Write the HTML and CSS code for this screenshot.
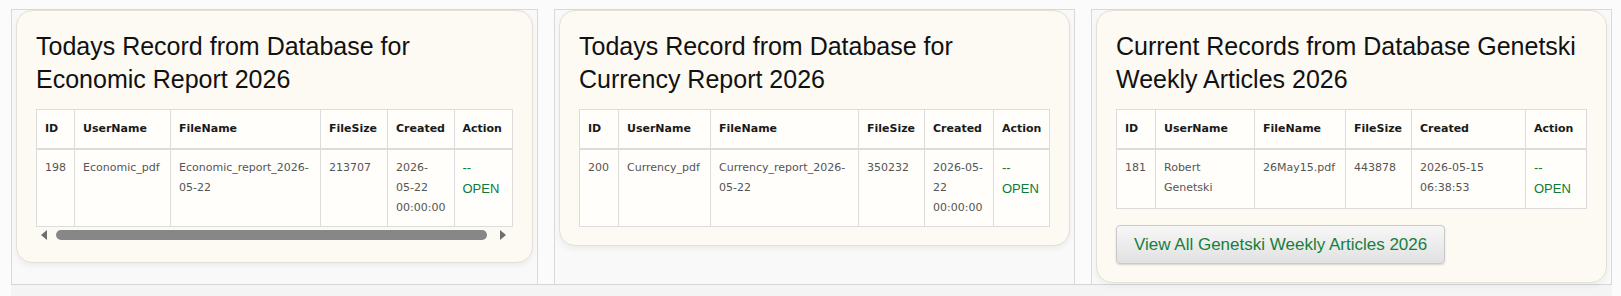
FILE: index.html
```html
<!DOCTYPE html>
<html lang="en">
<head>
    <meta charset="UTF-8">
    <meta name="viewport" content="width=device-width, initial-scale=1.0">
    <title>Database Records 2026</title>
    <link rel="stylesheet" href="styles.css">
</head>
<body>
    <main class="panels">
        <section class="panel">
            <div class="card">
                <h2 class="card-title">Todays Record from Database for Economic Report 2026</h2>
                <div class="table-scroll">
                    <div class="table-clip">
                        <table class="records records-econ">
                            <colgroup>
                                <col class="c-id"><col class="c-user"><col class="c-file"><col class="c-size"><col class="c-created"><col class="c-action">
                            </colgroup>
                            <thead>
                                <tr><th>ID</th><th>UserName</th><th>FileName</th><th>FileSize</th><th>Created</th><th>Action</th></tr>
                            </thead>
                            <tbody>
                                <tr>
                                    <td>198</td>
                                    <td>Economic_pdf</td>
                                    <td>Economic_report_2026-05-22</td>
                                    <td>213707</td>
                                    <td>2026-05-22 00:00:00</td>
                                    <td><a class="open" href="#">-- OPEN</a></td>
                                </tr>
                            </tbody>
                        </table>
                    </div>
                    <div class="hscroll">
                        <span class="arrow arrow-left"></span>
                        <span class="track"><span class="thumb"></span></span>
                        <span class="arrow arrow-right"></span>
                    </div>
                </div>
            </div>
        </section>

        <section class="panel">
            <div class="card">
                <h2 class="card-title">Todays Record from Database for Currency Report 2026</h2>
                <table class="records records-curr">
                    <colgroup>
                        <col class="c-id"><col class="c-user"><col class="c-file"><col class="c-size"><col class="c-created"><col class="c-action">
                    </colgroup>
                    <thead>
                        <tr><th>ID</th><th>UserName</th><th>FileName</th><th>FileSize</th><th>Created</th><th>Action</th></tr>
                    </thead>
                    <tbody>
                        <tr>
                            <td>200</td>
                            <td>Currency_pdf</td>
                            <td>Currency_report_2026-05-22</td>
                            <td>350232</td>
                            <td>2026-05-22 00:00:00</td>
                            <td><a class="open" href="#">-- OPEN</a></td>
                        </tr>
                    </tbody>
                </table>
            </div>
        </section>

        <section class="panel">
            <div class="card">
                <h2 class="card-title">Current Records from Database Genetski Weekly Articles 2026</h2>
                <table class="records records-gen">
                    <colgroup>
                        <col class="c-id"><col class="c-user"><col class="c-file"><col class="c-size"><col class="c-created"><col class="c-action">
                    </colgroup>
                    <thead>
                        <tr><th>ID</th><th>UserName</th><th>FileName</th><th>FileSize</th><th>Created</th><th>Action</th></tr>
                    </thead>
                    <tbody>
                        <tr>
                            <td>181</td>
                            <td>Robert Genetski</td>
                            <td>26May15.pdf</td>
                            <td>443878</td>
                            <td>2026-05-15 06:38:53</td>
                            <td><a class="open" href="#">-- OPEN</a></td>
                        </tr>
                    </tbody>
                </table>
                <div class="card-foot">
                    <a class="view-all" href="#">View All Genetski Weekly Articles 2026</a>
                </div>
            </div>
        </section>
    </main>
    <div class="page-foot"></div>
</body>
</html>
```

FILE: styles.css
```css
*,*::before,*::after{
    box-sizing: border-box;
}
body{
    margin: 0;
    background-color: #fbfbfb;
    font-family: "Liberation Sans", Arial, sans-serif;
    overflow: hidden;
}
.panels{
    display: grid;
    grid-template-columns: repeat(3, 1fr);
    column-gap: 16px;
    margin: 9px 9px 0 11px;
    border-bottom: 1px solid #d6d6d6;
}
.panel{
    border: 1px solid #d9d9d9;
    border-bottom: 0;
    padding: 0 4px 1px;
    background-color: #f9f9f9;
}
.card{
    background-color: #fcfaf3;
    border: 1px solid #e3e0d6;
    border-radius: 16px;
    padding: 19px 19px 18px;
    box-shadow: 0 3px 6px rgba(0, 0, 0, 0.05);
}
.card-title{
    margin: 0 0 13px;
    font-size: 25px;
    line-height: 33px;
    font-weight: 400;
    color: #111;
}
.table-clip{
    overflow: hidden;
}
.records{
    width: 100%;
    table-layout: fixed;
    border-collapse: collapse;
    background-color: #fffefb;
    font-family: "DejaVu Sans", Verdana, sans-serif;
    font-size: 11px;
    line-height: 20px;
    color: #555;
}
.records th,.records td{
    border: 1px solid #dcdcdc;
    padding: 8px;
    text-align: left;
    vertical-align: top;
}
.records th{
    padding: 9px 8px 8.5px;
    color: #1a1a1a;
    font-weight: 700;
    border-bottom-width: 2px;
    vertical-align: bottom;
}
.open{
    font-family: "Liberation Sans", Arial, sans-serif;
    font-size: 13px;
    color: #0d7a3a;
    text-decoration: none;
}
/* column widths, one set per table */
.records-econ{
    width: 476px;
}
.records-econ .c-id{ width: 38px; }
.records-econ .c-user{ width: 96px; }
.records-econ .c-file{ width: 150px; }
.records-econ .c-size{ width: 67px; }
.records-econ .c-created{ width: 66.5px; }
.records-econ .c-action{ width: 58.5px; }

.records-curr .c-id{ width: 39px; }
.records-curr .c-user{ width: 92px; }
.records-curr .c-file{ width: 148px; }
.records-curr .c-size{ width: 66px; }
.records-curr .c-created{ width: 69px; }

.records-gen .c-id{ width: 39px; }
.records-gen .c-user{ width: 99px; }
.records-gen .c-file{ width: 91px; }
.records-gen .c-size{ width: 66px; }
.records-gen .c-created{ width: 114px; }

.hscroll{
    display: flex;
    align-items: center;
    height: 17px;
    padding: 0 7px 0 5px;
}
.arrow{
    width: 0;
    height: 0;
    border-top: 5px solid transparent;
    border-bottom: 5px solid transparent;
}
.arrow-left{
    border-right: 6px solid #6e6e6e;
}
.arrow-right{
    border-left: 6px solid #6e6e6e;
}
.track{
    flex: 1;
    display: flex;
    height: 10px;
    margin: 0 13px 0 9px;
}
.thumb{
    flex: 1;
    background-color: #878787;
    border-radius: 5px;
}
.card-foot{
    display: flex;
    margin-top: 16px;
}
.view-all{
    padding: 9px 17px;
    font-size: 17px;
    line-height: 19px;
    color: #15803d;
    text-decoration: none;
    background: linear-gradient(#f7f7f7, #e1e1e1);
    border: 1px solid #c9c9c9;
    border-radius: 4px;
    box-shadow: 0 1px 2px rgba(0, 0, 0, 0.15);
}
.page-foot{
    height: 12px;
    margin: 0 9px 0 11px;
    background-color: #f4f4f4;
}
```
